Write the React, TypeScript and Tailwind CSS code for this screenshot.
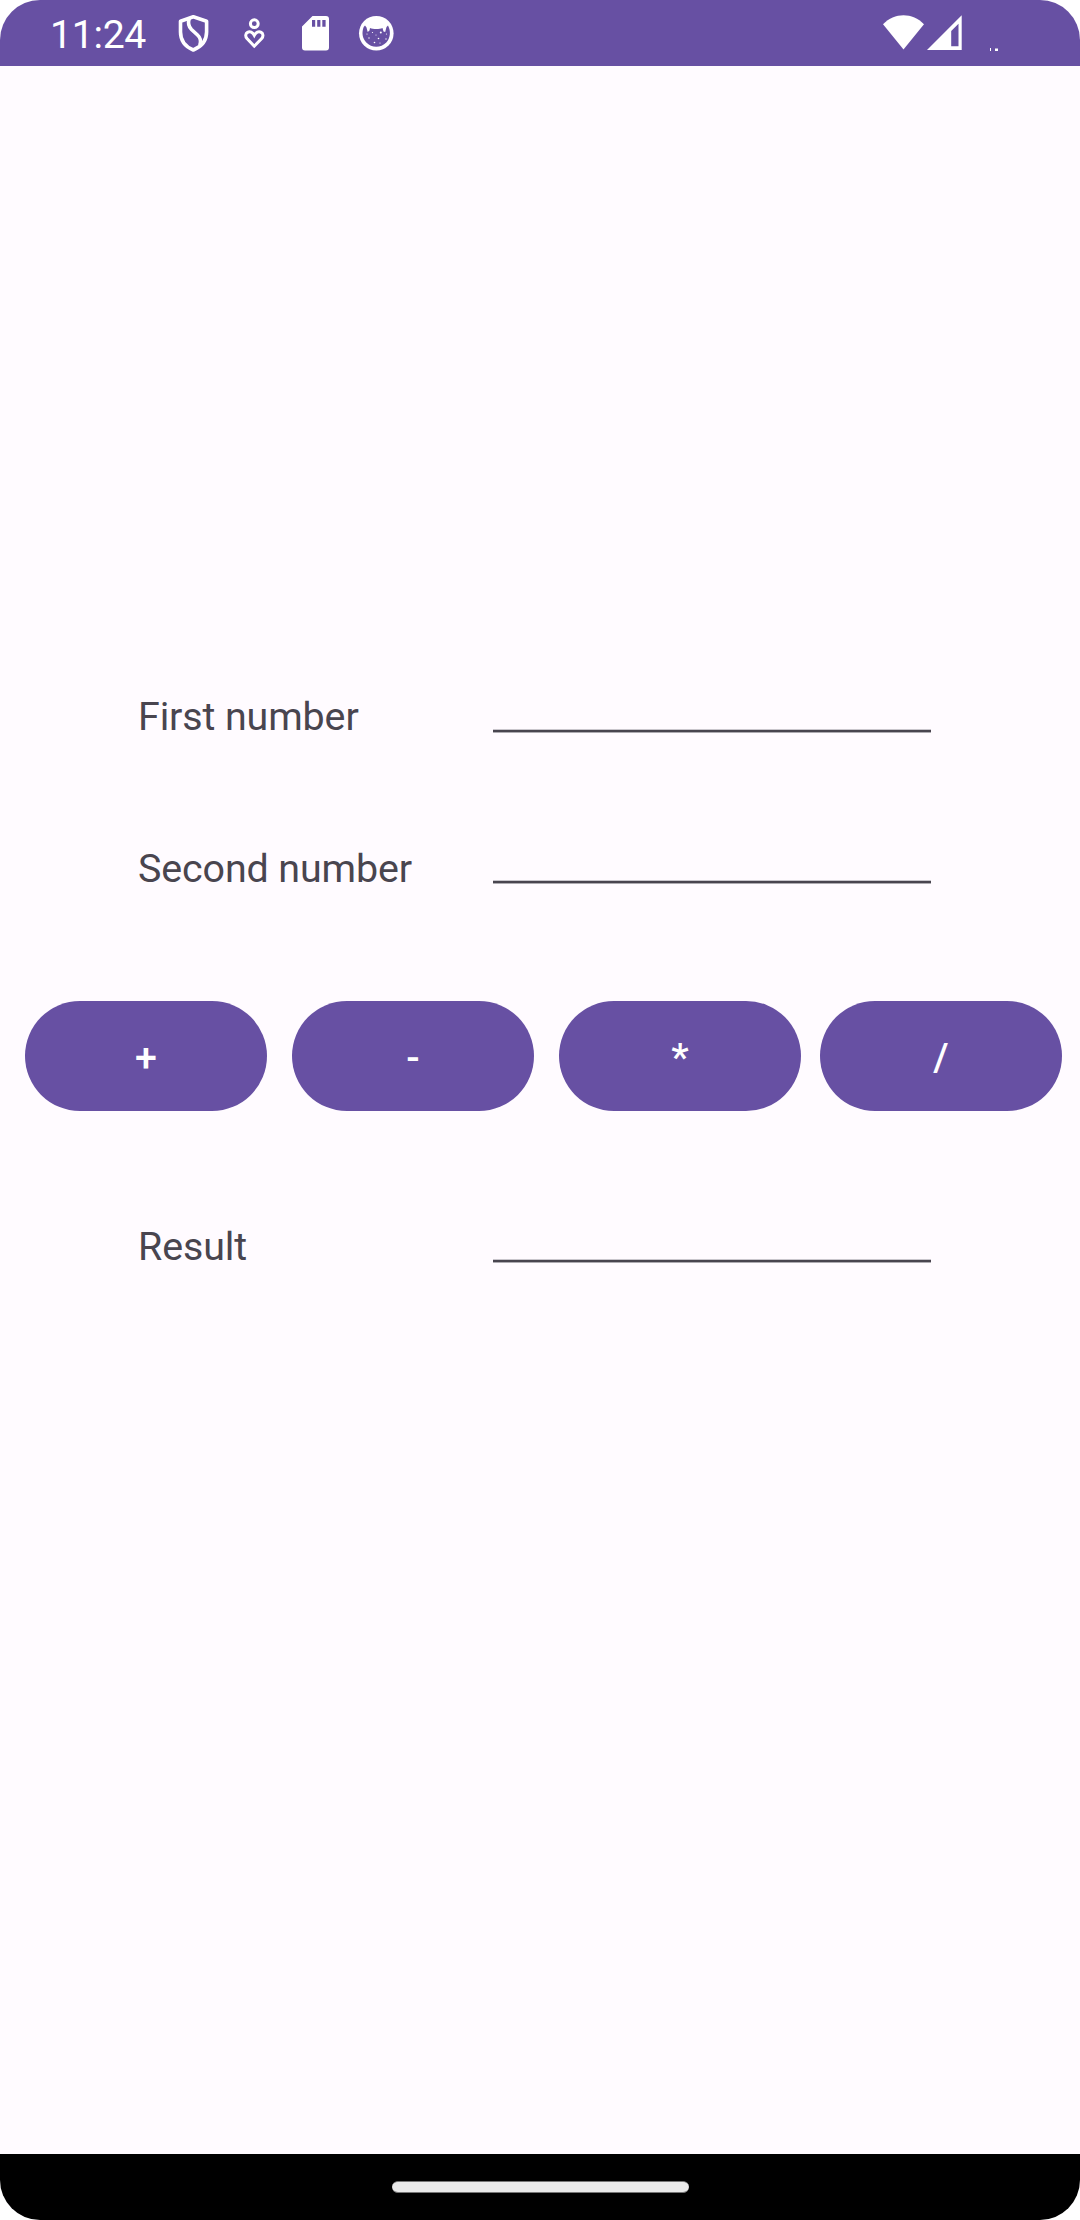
function StatusIcons() {
  return (
    <svg className="block h-[66px] w-[230px]" viewBox="170 0 230 66" fill="none" aria-hidden="true">
      {/* shield */}
      <g stroke="#fff" strokeWidth="3.6" strokeLinejoin="round">
        <path d="M193.300 16.700 L180.500 21.200 V32 C180.500 40.500 185.500 46.800 193.300 50 C201.200 46.800 206.600 40.500 206.600 32 V21.200 Z" />
        <path d="M189.200 18.500 C188 22.500 188.500 26.500 191.500 29.500 L197.500 35 C200.800 38 201.300 41.500 199.800 45.500" />
      </g>
      {/* person with heart */}
      <g stroke="#fff" strokeWidth="3">
        <circle cx="254.300" cy="23.700" r="3.900" />
        <path d="M254.300 46.200 L247 38.600 C245 36.300 245.500 33.500 247.500 32.400 C250 31 252.700 32.300 254.300 35.300 C255.900 32.300 258.600 31 261.200 32.400 C263.200 33.500 263.600 36.300 261.700 38.600 Z" />
      </g>
      {/* memory card */}
      <path
        fill="#fff"
        fillRule="evenodd"
        d="M312.500 16 H326 Q329 16 329 19 V47.500 Q329 50.500 326 50.500 H305 Q302 50.500 302 47.500 V26.500 Z M312 20 V26.700 H315.200 V20 Z M317.200 20 V26.700 H320.400 V20 Z M322.300 20 V26.700 H325.600 V20 Z"
      />
      {/* cat badge */}
      <circle cx="376.300" cy="33.300" r="17.300" fill="#fff" />
      <path
        fill="#6750a3"
        d="M363.700 27 L365 25.500 L366.500 27.500 L367.700 32 L369.500 30.500 L370 28 C373 29.300 379.500 29.300 382.500 28 L383.500 31.500 L385.200 32 L386.500 27 L388 25.500 C391 31 390.500 38 386.300 42.500 C380.800 48.200 371.500 48 366.300 42.500 C362.300 38.300 361.500 32.500 363.700 27 Z"
      />
      <g fill="#fff">
        <circle cx="372.500" cy="32.500" r=".6" />
        <circle cx="380.800" cy="32.400" r="1" />
        <circle cx="367" cy="34" r=".6" />
        <circle cx="386.500" cy="34" r=".6" />
        <circle cx="369" cy="38" r=".7" />
        <circle cx="378.500" cy="38.500" r=".8" />
        <circle cx="386" cy="39" r=".7" />
        <circle cx="374.500" cy="42.500" r=".8" />
        <circle cx="380" cy="43" r=".6" />
        <circle cx="376" cy="35" r=".5" />
      </g>
    </svg>
  );
}

function SignalIcons() {
  return (
    <svg className="block h-[66px] w-[120px]" viewBox="880 0 120 66" fill="#fff" aria-hidden="true">
      <path d="M903.500 49.500 L883 24.300 C894.500 12.200 912.500 12.200 924 24.300 Z" />
      <path fillRule="evenodd" d="M927 50 L961.700 15.200 V50 Z M951.200 31 V46.200 H958.500 V23.700 Z" />
      <path d="M990 48h1v3h-1z M995 49h3v2h-3z" />
      <path fillOpacity=".5" d="M995 48h3v1h-3z" />
    </svg>
  );
}

function Field({ label, className, labelClassName = "pt-[2px]" }: { label: string; className: string; labelClassName?: string }) {
  return (
    <div className={`flex h-[60px] pl-[138px] ${className}`}>
      <label className={`w-[355px] text-[39.4px] leading-[60px] tracking-[-0.12px] text-[#49454f] ${labelClassName}`}>
        {label}
      </label>
      <div className="flex w-[438px] flex-col justify-end pb-[12px]">
        <div className="h-px bg-[#c9c6cc]" />
        <div className="h-[2px] bg-[#49454f]" />
        <div className="h-px bg-[#aeabb1]" />
      </div>
    </div>
  );
}

function OpButton({ symbol }: { symbol: string }) {
  return (
    <button className="block h-[110px] w-[242px] rounded-full bg-[#6750a3] pt-[4px] text-[39.4px] font-medium leading-[106px] text-white">
      {symbol}
    </button>
  );
}

export default function App() {
  return (
    <div className="h-[2220px] w-[1080px] bg-white font-['Roboto',sans-serif]">
      <div className="flex h-full flex-col overflow-hidden rounded-[40px] bg-[#fffbff]">
        <header className="flex h-[66px] items-center bg-[#6750a3] pl-[50px] text-white">
          <span className="w-[120px] pt-[4px] text-[39.2px] leading-[62px] tracking-[-0.3px]">11:24</span>
          <StatusIcons />
          <div className="ml-[480px]">
            <SignalIcons />
          </div>
        </header>
        <main className="flex-1">
          <Field label="First number" className="mt-[619px]" />
          <Field label="Second number" className="mt-[91px]" labelClassName="pt-[3px]" />
          <div className="mt-[105px] flex pl-[25px]">
            <OpButton symbol="+" />
            <div className="ml-[25px]"><OpButton symbol="-" /></div>
            <div className="ml-[25px]"><OpButton symbol="*" /></div>
            <div className="ml-[19px]"><OpButton symbol="/" /></div>
          </div>
          <Field label="Result" className="mt-[104px]" />
        </main>
        <footer className="flex h-[66px] items-start justify-center bg-black pt-[27px]">
          <div className="h-[12px] w-[297px] rounded-full border-y border-[#777] bg-[#eaeaea]" />
        </footer>
      </div>
    </div>
  );
}
